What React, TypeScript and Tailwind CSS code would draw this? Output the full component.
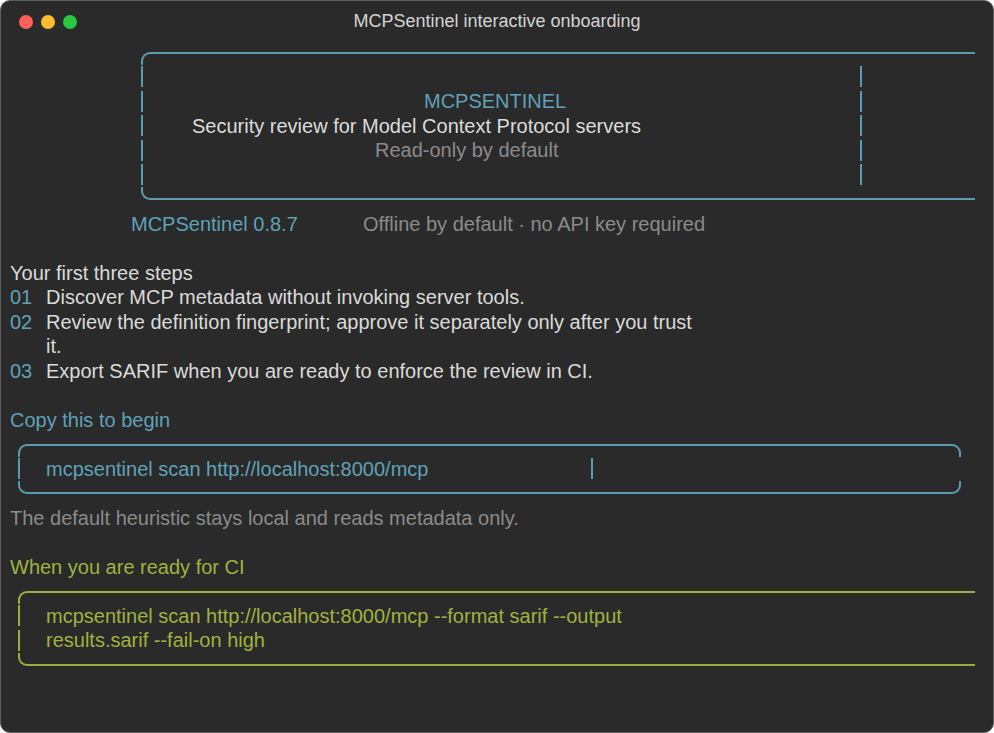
import React from 'react';

const teal = 'text-[#5fa2b8]';

const Bar = ({ tone }: { tone: 'teal' | 'olive' }) => (
  <span className={`block h-[21px] w-[2px] shrink-0 ${tone === 'teal' ? 'bg-[#5a9cb1]' : 'bg-[#9cae3c]'}`} />
);

// top or bottom edge of a box drawn with a rounded corner on the left, optionally on the right
const Edge = ({
  tone,
  left,
  width,
  bottom,
  rightCorner,
}: {
  tone: 'teal' | 'olive';
  left: string;
  width: string;
  bottom?: boolean;
  rightCorner?: boolean;
}) => {
  const c = tone === 'teal' ? 'border-[#5a9cb1]' : 'border-[#9cae3c]';
  return (
    <div className={`flex h-[24.5px] ${bottom ? 'items-start' : 'items-end'}`}>
      <div className={`flex ${left} ${width}`}>
        <div
          className={`h-[13px] w-[11px] shrink-0 border-l-2 ${c} ${
            bottom ? 'border-b-2 rounded-bl-[9px]' : 'border-t-2 rounded-tl-[9px]'
          }`}
        />
        <div className={`h-[13px] flex-1 ${c} ${bottom ? 'border-b-2' : 'border-t-2'}`} />
        {rightCorner && (
          <div
            className={`h-[13px] w-[11px] shrink-0 border-r-2 ${c} ${
              bottom ? 'border-b-2 rounded-br-[9px]' : 'border-t-2 rounded-tr-[9px]'
            }`}
          />
        )}
      </div>
    </div>
  );
};

const Line = ({ children, className = '' }: { children?: React.ReactNode; className?: string }) => (
  <div className={`flex h-[24.5px] items-center whitespace-nowrap ${className}`}>{children}</div>
);

export default function App() {
  const steps = [
    { n: '01', text: ['Discover MCP metadata without invoking server tools.'] },
    { n: '02', text: ['Review the definition fingerprint; approve it separately only after you trust', 'it.'] },
    { n: '03', text: ['Export SARIF when you are ready to enforce the review in CI.'] },
  ];

  return (
    <div className="h-[733px] w-[994px] bg-white" style={{ fontFamily: '"Liberation Sans", Arial, sans-serif' }}>
      <div className="flex h-[733px] w-[994px] flex-col overflow-hidden rounded-[10px] border border-[#5e5e5e] bg-[#2a2a2a] text-[20px] text-[#dadada]">
        {/* Title bar */}
        <div className="relative flex h-[39px] shrink-0 items-center justify-center">
          <div className="absolute left-[18px] top-[14px] flex gap-[8px]">
            <span className="h-[14px] w-[14px] rounded-full bg-[#fe5f57]" />
            <span className="h-[14px] w-[14px] rounded-full bg-[#febc2e]" />
            <span className="h-[14px] w-[14px] rounded-full bg-[#28c840]" />
          </div>
          <span className="pt-[1px] text-[18px] text-[#d4d4d4]">MCPSentinel interactive onboarding</span>
        </div>

        {/* Banner */}
        <Edge tone="teal" left="ml-[140px]" width="w-[834px]" />
        {['', 'MCPSENTINEL', 'Security review for Model Context Protocol servers', 'Read-only by default', ''].map((t, i) => (
          <Line key={i}>
            <div className="ml-[140px] flex w-[721px] items-center">
              <Bar tone="teal" />
              <span
                className={`flex-1 ${
                  i === 1 ? `pl-[281px] ${teal}` : i === 2 ? 'pl-[49px] text-[#dcdcdc]' : 'pl-[232px] text-[#8b8b8b]'
                }`}
              >
                {t}
              </span>
              <Bar tone="teal" />
            </div>
          </Line>
        ))}
        <Edge tone="teal" left="ml-[140px]" width="w-[834px]" bottom />

        <Line>
          <span className={`ml-[130px] w-[232px] ${teal}`}>MCPSentinel 0.8.7</span>
          <span className="text-[#8b8b8b]">Offline by default · no API key required</span>
        </Line>
        <Line />

        {/* Steps */}
        <Line className="pl-[9px]">Your first three steps</Line>
        {steps.map((s) =>
          s.text.map((t, j) => (
            <Line key={s.n + j} className="pl-[9px]">
              <span className={`w-[36px] ${teal}`}>{j === 0 ? s.n : ''}</span>
              <span>{t}</span>
            </Line>
          ))
        )}
        <Line />

        {/* Quick start */}
        <Line className={`pl-[9px] ${teal}`}>Copy this to begin</Line>
        <Edge tone="teal" left="ml-[17px]" width="w-[943px]" rightCorner />
        <Line>
          <div className="ml-[17px] flex w-[575px] items-center">
            <Bar tone="teal" />
            <span className={`flex-1 pl-[26px] ${teal}`}>mcpsentinel scan http://localhost:8000/mcp</span>
            <Bar tone="teal" />
          </div>
        </Line>
        <Edge tone="teal" left="ml-[17px]" width="w-[943px]" bottom rightCorner />
        <Line className="pl-[9px] text-[#8b8b8b]">The default heuristic stays local and reads metadata only.</Line>
        <Line />

        {/* CI */}
        <Line className="pl-[9px] text-[#a0b23f]">When you are ready for CI</Line>
        <Edge tone="olive" left="ml-[17px]" width="w-[957px]" />
        {['mcpsentinel scan http://localhost:8000/mcp --format sarif --output', 'results.sarif --fail-on high'].map((t) => (
          <Line key={t}>
            <div className="ml-[17px] flex items-center">
              <Bar tone="olive" />
              <span className="pl-[26px] text-[#a0b23f]">{t}</span>
            </div>
          </Line>
        ))}
        <Edge tone="olive" left="ml-[17px]" width="w-[957px]" bottom />
      </div>
    </div>
  );
}
